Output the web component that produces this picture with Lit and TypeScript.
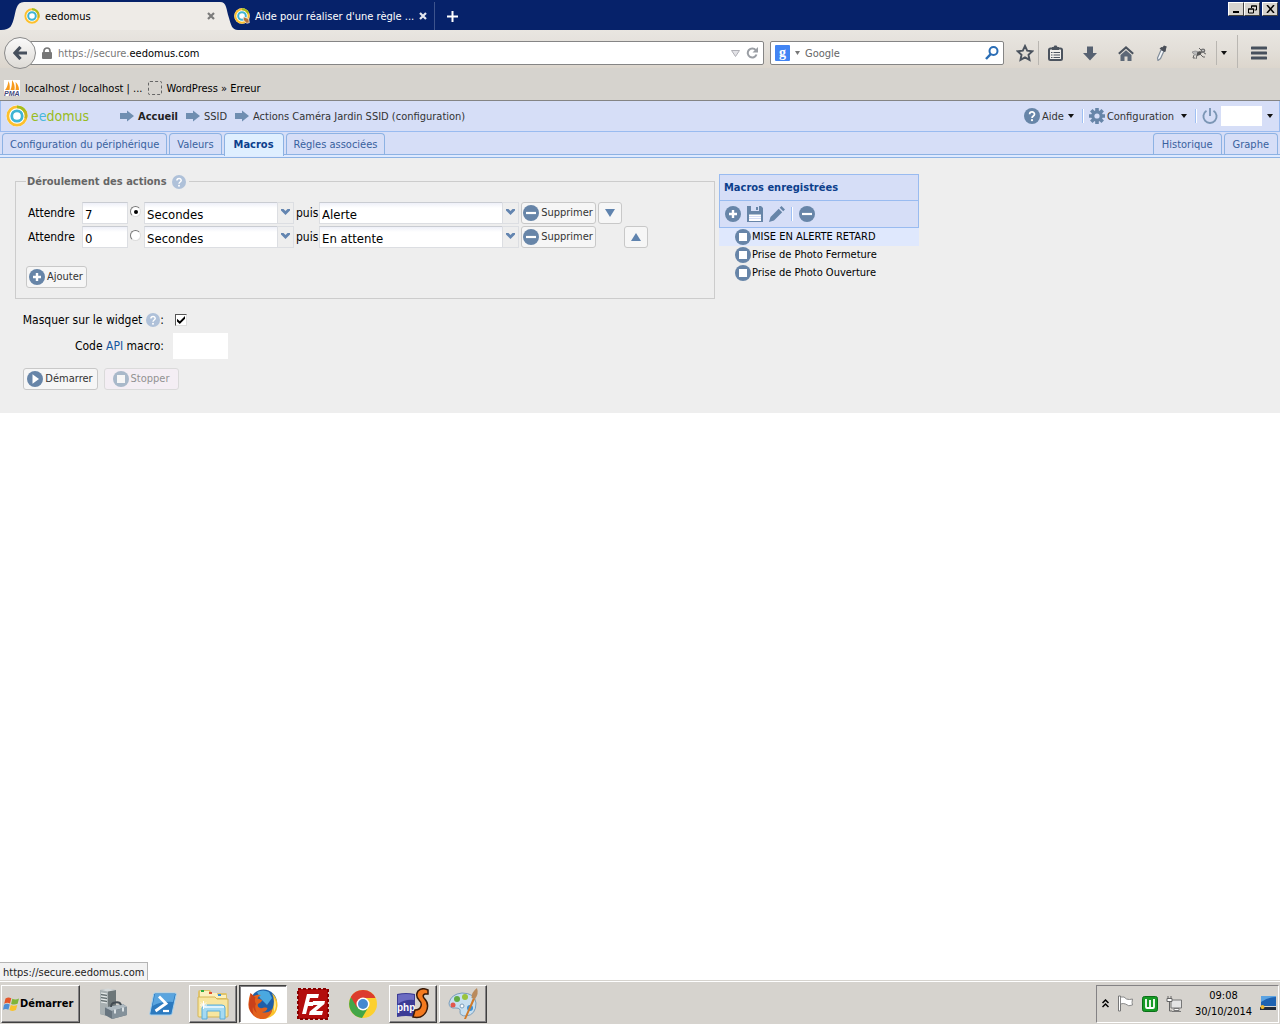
import { LitElement, html, svg, css, nothing } from "lit";
import { customElement, state } from "lit/decorators.js";

const ringIcon = (size: number) => html`
  <svg width=${size} height=${size} viewBox="0 0 24 24" aria-hidden="true">
    <circle cx="12" cy="12" r="11.6" fill="#fff" />
    <circle cx="12" cy="12" r="10" fill="none" stroke="#fcc02e" stroke-width="3" />
    <path d="M12 2a10 10 0 0 1 9.2 6" fill="none" stroke="#a3bd1f" stroke-width="3" />
    <path d="M20.5 6.5a10 10 0 0 1 1 8" fill="none" stroke="#c8b51f" stroke-width="3" />
    <circle cx="12" cy="12" r="5.7" fill="#fff" stroke="#3fb4d4" stroke-width="3" />
  </svg>`;

const ringSearchIcon = html`
  <svg width="16" height="16" viewBox="0 0 24 24" aria-hidden="true">
    <circle cx="12" cy="12" r="11.6" fill="#fff" />
    <circle cx="12" cy="12" r="10" fill="none" stroke="#fcc02e" stroke-width="3" />
    <path d="M12 2a10 10 0 0 1 9.2 6" fill="none" stroke="#a3bd1f" stroke-width="3" />
    <circle cx="12" cy="12" r="5.7" fill="#fff" stroke="#3fb4d4" stroke-width="3" />
    <path d="M14 13l8 3 1 6-4 1-5-5z" fill="#b5743c" stroke="#fff" />
  </svg>`;

const disc = (glyph: unknown, size = 16) => html`
  <svg width=${size} height=${size} viewBox="0 0 16 16" aria-hidden="true">
    <circle cx="8" cy="8" r="8" fill="#6785a8" />${glyph}
  </svg>`;

const plusGlyph = svg`<path d="M8 4v8M4 8h8" stroke="#fff" stroke-width="2.4" />`;
const minusGlyph = svg`<path d="M3 8h10" stroke="#fff" stroke-width="2.2" />`;
const squareGlyph = svg`<path d="M4 4h8v8H4z" fill="#fff" />`;
const playGlyph = svg`<path d="M5.5 3.2 12 8l-6.500 4.800z" fill="#fff" />`;
const helpGlyph = svg`<path d="M5.6 6.2c.1-3 5-3 4.900.1C10.500 8 8 8 8 10" fill="none" stroke="#fff" stroke-width="1.700" /><circle cx="8" cy="12.200" r="1.100" fill="#fff" />`;

const helpSoft = html`
  <svg width="14" height="14" viewBox="0 0 16 16" aria-hidden="true">
    <circle cx="8" cy="8" r="8" fill="#afc1d9" />${helpGlyph}
  </svg>`;

const arrowRight = html`
  <svg width="14" height="12" viewBox="0 0 14 12" aria-hidden="true">
    <path d="M0 3h7V.5L14 6l-7 5.500V9H0z" fill="#6f8eb1" />
  </svg>`;

const caret = html`
  <svg width="6" height="4" viewBox="0 0 6 4" aria-hidden="true">
    <path d="M0 0h6L3 4z" fill="#111" />
  </svg>`;

const chevron = html`
  <svg width="9" height="6" viewBox="0 0 9 6" aria-hidden="true">
    <path d="M0 0h2.500l2 2 2-2H9v1.500L4.500 6 0 1.500z" fill="#6385b0" />
  </svg>`;

const icons = {
  lock: html`<svg width="10" height="12" viewBox="0 0 10 12"><path d="M2 6V4a3 3 0 0 1 6 0v2" fill="none" stroke="#777" stroke-width="1.700"/><rect y="5" width="10" height="7" rx="1" fill="#777"/></svg>`,
  back: html`<svg width="14" height="14" viewBox="0 0 14 14"><path d="M7.500 1 2 7l5.500 6M2.500 7H14" fill="none" stroke="#47505d" stroke-width="3.200"/></svg>`,
  reload: html`<svg width="12" height="12" viewBox="0 0 12 12"><path d="M9.800 3.200A4.500 4.500 0 1 0 10.500 7.500" fill="none" stroke="#9a9ea4" stroke-width="2"/><path d="M6.500 5.500H12V0z" fill="#9a9ea4"/></svg>`,
  search: html`<svg width="14" height="14" viewBox="0 0 14 14"><circle cx="8.500" cy="5" r="4" fill="none" stroke="#2a6db5" stroke-width="2"/><path d="M5.800 8 1 13" stroke="#2a6db5" stroke-width="2.500"/></svg>`,
  star: html`<svg width="18" height="18" viewBox="0 0 18 18"><path d="m9 2 2.200 4.700 5.100.6-3.800 3.500 1 5.100L9 13.400l-4.500 2.500 1-5.100L1.700 7.300l5.100-.6z" fill="none" stroke="#4b535e" stroke-width="1.900"/></svg>`,
  list: html`<svg width="15" height="16" viewBox="0 0 15 16"><rect x="1" y="3.500" width="13" height="11.500" rx="1.500" fill="#f1efec" stroke="#4b535e" stroke-width="2"/><path d="M4 5V2h1.500L6.500.5h2L9.500 2H11v3z" fill="#4b535e"/><path d="M3 7.500h1.500M5.500 7.500H12M3 10h1.500M5.500 10H12M3 12.500h1.500M5.500 12.500H12" stroke="#4b535e" stroke-width="1.200"/></svg>`,
  down: html`<svg width="14" height="15" viewBox="0 0 14 15"><path d="M4 .5h6V7h4l-7 7.500L0 7h4z" fill="#566171"/></svg>`,
  home: html`<svg width="16" height="15" viewBox="0 0 16 15"><path d="M.8 7.800 8 1.400l7.200 6.400" fill="none" stroke="#4b535e" stroke-width="2"/><path d="M2.500 9 8 4.200 13.500 9v6H9.500v-4.500h-3V15h-4z" fill="#5d6877"/></svg>`,
  dropper: html`<svg width="12" height="16" viewBox="0 0 12 16"><path d="M8 6 4.500 13.500 2 15.500l-.5-2.500L5 5z" fill="#f4f7fa" stroke="#828d9a" stroke-width="1.200"/><path d="M3.500 3.500 5.500 2l1 .3L8 .5l2.800 1L10 4l-.3 2.500-1.500.5z" fill="#4a4f58"/></svg>`,
  bug: html`<svg width="15" height="13" viewBox="0 0 15 13"><path d="M1 5Q4 3 8 5l-1 3Q3 9 1 5z" fill="#b9b9b9" stroke="#888" stroke-width=".7"/><path d="M6 5.500 9 4l2 1.500L9 8 6 9z" fill="#555"/><circle cx="12" cy="3.800" r="2.300" fill="#6f6f6f"/><circle cx="12" cy="3.500" r=".8" fill="#ddd"/><path d="M3 8l-1 3h2M6 8l-1 4M9 7l3 3h2M10 3 8 1M13 6l2 1" fill="none" stroke="#666" stroke-width="1"/></svg>`,
  gear: html`<svg width="16" height="16" viewBox="0 0 16 16"><path d="M8 0v16M0 8h16M2.300 2.300l11.400 11.400M13.700 2.300 2.300 13.700" stroke="#6785a8" stroke-width="3.600"/><circle cx="8" cy="8" r="5.800" fill="#6785a8"/><circle cx="8" cy="8" r="2.600" fill="#d6def7"/></svg>`,
  power: html`<svg width="16" height="16" viewBox="0 0 16 16"><path d="M4.500 2.800a6.600 6.600 0 1 0 7 0" fill="none" stroke="#7b96b5" stroke-width="1.900"/><path d="M8 0v8" stroke="#7b96b5" stroke-width="1.900"/></svg>`,
  save: html`<svg width="16" height="16" viewBox="0 0 16 16"><path d="M0 0h14l2 2v14H0z" fill="#6785a8"/><path d="M4 0h8v5H4z" fill="#d6def7"/><path d="M9 1h2v3H9z" fill="#6785a8"/><path d="M2 8.500h12V15H2z" fill="#fff"/><path d="M2 10.500h12M2 12.500h12" stroke="#d6def7"/></svg>`,
  pencil: html`<svg width="16" height="16" viewBox="0 0 16 16"><path d="m0 16 1.500-5 8.200-8.200 3.500 3.500L5 14.500zM10.700 1.800 12.500 0 16 3.500l-1.800 1.800z" fill="#6785a8"/></svg>`,
  triDown: html`<svg width="10" height="8" viewBox="0 0 10 8"><path d="M0 0h10L5 8z" fill="#5f83ae"/></svg>`,
  triUp: html`<svg width="10" height="8" viewBox="0 0 10 8"><path d="M0 8h10L5 0z" fill="#5f83ae"/></svg>`,
  pma: html`<svg width="16" height="16" viewBox="0 0 16 16"><rect width="16" height="16" fill="#fff"/><path d="M1 10C3 8 4 4 4.500 1 6 4 6 8 5.500 10zM6.500 10C8 7 8 3 8 0c2.500 3 3 7 2.500 10zM11.500 10c.5-3 .5-5 0-8 2.500 2 3.500 5 3.500 8z" fill="#f79a1c"/><text x="0" y="16" font-family="Liberation Sans, sans-serif" font-size="7" font-weight="700" font-style="italic" fill="#44477c">PMA</text></svg>`,
  flagWin: html`<svg width="17" height="16" viewBox="0 0 17 16"><path d="M2.500 2.500C4.500 1 6.500 1.200 8.300 2.200L7 7.500C5.300 6.500 3.300 6.500 1.200 7.700z" fill="#e5562a"/><path d="M9.300 2.700c2 1 4.200 1 6.700-.2l-1.400 5.300c-2 1-4.500 1-6.500.1z" fill="#7fb53a"/><path d="M1 8.700c2-1.200 4-1.100 5.800-.2l-1.400 5.200c-1.600-1-3.600-1-5.400.1z" fill="#4d8fd6"/><path d="M7.800 9c2 .9 4.500.9 6.500-.1l-1.400 5.200c-2 1.100-4.500 1-6.500-.1z" fill="#f8c32c"/></svg>`,
};

const taskIcons = {
  server: html`<svg width="32" height="32" viewBox="0 0 32 32"><path d="M3 2 11 1l8 1v24l-9 2-7-2z" fill="#8b9496"/><path d="m3 2 8 1v25l-8-2z" fill="#a8b0b2"/><path d="m11 3 8-1v24l-8 2z" fill="#6d7678"/><path d="m3 2 8-1.500L19 2l-8 1.500z" fill="#d5d9da"/><path d="m4 5 6 1M4 8l6 1M4 11l6 1M4 14l6 1" stroke="#e8ecec" stroke-width="1.200"/><path d="m4 6.500 6 1M4 9.500l6 1M4 12.500l6 1" stroke="#5f696b"/><path d="M8 19.500 26 16l4 3v8l-15 4-7-4z" fill="#68757f"/><path d="m8 19.500 18-3.500 4 3-15 4z" fill="#aeb9c0"/><path d="m15 23 15-4v8l-15 4z" fill="#84919a"/><path d="M14 19q0-4 4-4.500 5-1 6 2.500" fill="none" stroke="#424b52" stroke-width="1.800"/><path d="M18 21.500v4M26 19.500v4" stroke="#d9e0e4" stroke-width="2"/></svg>`,
  shell: html`<svg width="28" height="24" viewBox="0 0 28 24"><path d="M6 1h20q1.500 0 1.200 1.500L23 21.500q-.4 1.500-2 1.500H2q-1.500 0-1.200-1.500L4.600 2.500Q5 1 6 1z" fill="#2c7abf" stroke="#a5d2f0"/><path d="M6 2h20l-2 8Q13 9 3.500 14z" fill="#5aa5df"/><path d="m10 4.500 7 7L6.500 19" fill="none" stroke="#fff" stroke-width="2.800"/><path d="M14 19h6" stroke="#fff" stroke-width="2.200"/></svg>`,
  folder: html`<svg width="34" height="32" viewBox="0 0 34 32"><path d="M2 8V4q0-2 2-2h10l2 3h14q1 0 1 2v20H2z" fill="#dfc36c"/><path d="M4 3h9v6H4zM12 5h9l1 4H12zM20 7h10v3H20z" fill="#fbf0bf"/><path d="M5 2h3v2H5z" fill="#2faa42"/><path d="M13 4h3v2h-3z" fill="#e2502e"/><path d="M22 6h3v2h-3z" fill="#2f8de0"/><path d="M2 9h17l2 2h11v17q0 1-1 1H3q-1 0-1-1z" fill="#f8e6a0" stroke="#d4b454"/><path d="M6 31V20q0-3 3-3h17q3 0 3 3v11h-5v-8H11v8z" fill="#a5daf2" stroke="#5baeda"/><path d="M7 18h21v2H7z" fill="#dff3fc"/><path d="M4 17h7M7.500 13v8M5 14.500l5 5M10 14.500l-5 5" stroke="#fff" stroke-width="1"/></svg>`,
  firefox: html`<svg width="30" height="30" viewBox="0 0 30 30"><circle cx="15.500" cy="14" r="13.500" fill="#1f5fa8"/><path d="M9 3q6-3 12 0l3 6-5 7-7-7z" fill="#4aa8e0"/><path d="M24 4q6 6 5.500 13-1 8-7 11-4 2-9 2 9-3 11-10 3-8-.5-16z" fill="#fbc22b"/><path d="M26.500 9q3 8-.5 14 0-7 .5-14z" fill="#fff0a0"/><path d="M2.500 4Q3.500 7 6 7q3-2 7-1-3 1-3.500 3.500L14 11q0 2-4 4-1 3 2 4 2 .5 4-.5 3-.5 3.500 1Q18 23 14 23q6 2 10-3 0 6-6 9.500-7 2-12-2.500Q-.5 21 .5 14 1 8 2.500 4z" fill="#e2611b"/><path d="M2.500 4Q3 8 1.500 12-.500 20 6 27q-2-5-1-9 1 4 4 6-3-6-1-9-2-3-.5-6.500z" fill="#c9401a"/></svg>`,
  filezilla: html`<svg width="32" height="32" viewBox="0 0 32 32"><rect x="1" y="1" width="30" height="30" fill="#b30d0d" stroke="#870000" stroke-width="2" stroke-dasharray="3 2"/><path d="M10 6h12l-1 4h-8l-1 4h5l-1 4h-5l-2 8H5zM16 13h12l-.6 3-8.400 7h7l-1 4H12l.7-3.500 8-6.500h-5.500z" fill="#fff"/></svg>`,
  chrome: html`<svg width="28" height="28" viewBox="0 0 28 28"><circle cx="14" cy="14" r="14" fill="#fcd02f"/><path d="M14 14 2 7a14 14 0 0 0 11 21l6.500-11-5.500-3z" fill="#42a647"/><path d="M1.800 7 8 17.500 14 8h12.500A14 14 0 0 0 1.800 7z" fill="#dc3c2d"/><circle cx="14" cy="14" r="6.500" fill="#fff"/><circle cx="14" cy="14" r="5" fill="#4589d0"/></svg>`,
  php: html`<svg width="32" height="32" viewBox="0 0 32 32"><path d="M0 6q9-2 18 0v23q-9-2-18 0z" fill="#3c3c96"/><path d="M1 7q8-2 16 0v5q-9-1-16 4z" fill="#6c6cc2"/><text x="0" y="23" font-family="Liberation Sans, sans-serif" font-size="10" font-weight="700" fill="#fff">php</text><path d="M31 2q-6-3-10 1-3 5 1 9 3 3 2 6-1 4-6 4l-2 7q9 2 13-5 4-8-2-14-2-3 1-4h3z" fill="#f47a1f" stroke="#3a1a08" stroke-width="1.500"/></svg>`,
  paint: html`<svg width="32" height="32" viewBox="0 0 32 32"><path d="M2 15Q4 6 15 5q13 0 14 10 0 12-10 13-6 0-6-4 1-4-4-4-7 1-7-5z" fill="#c7dff0" stroke="#7a9dbb"/><circle cx="6" cy="17" r="2.500" fill="#e2574c"/><circle cx="10" cy="11" r="3" fill="#62ab44"/><circle cx="18" cy="9" r="3" fill="#9ac33c"/><circle cx="23" cy="20" r="3" fill="#3b92d6"/><circle cx="15" cy="18" r="2" fill="#fff" stroke="#7a9dbb"/><path d="m17 31 9-21 2 1-9 20z" fill="#d07a2a"/><path d="M24.500 10q0-6 5.500-10 2 6-2 11z" fill="#b98a5c"/></svg>`,
};

interface Step {
  delay: string;
  unit: string;
  value: string;
}

@customElement("app-root")
export class AppRoot extends LitElement {
  @state() private steps: Step[] = [
    { delay: "7", unit: "Secondes", value: "Alerte" },
    { delay: "0", unit: "Secondes", value: "En attente" },
  ];
  @state() private current = 0;
  @state() private macros = ["MISE EN ALERTE RETARD", "Prise de Photo Fermeture", "Prise de Photo Ouverture"];

  static styles = css`
    :host {
      display: flex;
      flex-direction: column;
      min-height: 100vh;
      background: #fff;
      color: #000;
      font: 11px/16px Tahoma, "DejaVu Sans Condensed", "DejaVu Sans", sans-serif;
    }
    * { box-sizing: border-box; }
    svg { display: block; flex: none; }
    button, input, select { font: inherit; color: inherit; margin: 0; padding: 0; border: 0; background: none; }
    a { color: inherit; text-decoration: none; }
    ul { list-style: none; margin: 0; padding: 0; }
    .grow { flex: 1; }

    .titlebar { display: flex; height: 30px; background: #06226a; color: #fff; }
    .tabs { display: flex; flex: 1; align-items: flex-end; }
    .tab { display: flex; height: 28px; color: #000; }
    .tab-body { display: flex; align-items: center; width: 196px; background: #eeebe7; gap: 5px; }
    .tab-idle { display: flex; align-items: center; height: 28px; gap: 5px; width: 201px; margin-left: -4px; padding-right: 10px; border-right: 1px solid #3d548d; }
    .tab-name { flex: 1; padding-top: 1px; text-align: left; white-space: nowrap; }
    .tab-add { padding: 8px 12px; }
    .window-buttons { display: flex; padding: 2px 2px 0 0; align-items: flex-start; }
    .window-button { display: grid; place-items: center; width: 16px; height: 14px; background: #d6d3ce; border: 1px solid; border-color: #fff #404040 #404040 #fff; }
    .window-button:last-child { margin-left: 2px; }

    .navbar { display: flex; align-items: center; height: 38px; padding: 8px 12px 0 4px; background: linear-gradient(#e9e6e1, #e3dfd9 50%, #dcd6cd); }
    .back { display: grid; place-items: center; width: 32px; height: 32px; border: 1px solid #8a8a8a; border-radius: 50%; background: linear-gradient(#fafafa, #dedbd6); z-index: 1; }
    .field { display: flex; align-items: center; height: 24px; border: 1px solid #858585; border-radius: 2px; background: #fff; }
    .address { flex: 1; margin-left: -8px; padding: 0 5px 0 13px; gap: 6px; }
    .host { flex: 1; padding-top: 2px; color: #777; }
    .host b { font-weight: 400; color: #000; }
    .search { width: 234px; margin-left: 6px; padding: 0 4px; gap: 5px; }
    .search input { flex: 1; min-width: 0; padding-top: 2px; outline: 0; }
    .search input::placeholder { color: #666; opacity: 1; }
    .google { display: grid; place-items: center; width: 15px; height: 16px; border-radius: 1px; background: #4285f4; color: #fff; font: 700 14px/14px "Liberation Serif", serif; }
    .tools { display: flex; align-items: center; padding-left: 11px; }
    .tool { display: grid; place-items: center; width: 36px; height: 24px; }
    .tool-star { width: 19px; }
    .tool-list { width: 34px; border-left: 1px solid #b9b6b1; margin-left: 4px; }
    .tool-more { width: 15px; border-left: 1px solid #b9b6b1; }
    .tool-menu { width: 31px; height: 36px; border-left: 1px solid #bab7b2; margin-left: 6px; padding-left: 12px; }

    .bookmarks { display: flex; align-items: center; height: 33px; padding: 8px 4px 0; gap: 5px; background: #d6d3ce; border-bottom: 1px solid #848484; }
    .bookmark { display: flex; align-items: center; gap: 5px; }
    .bookmark span { padding-top: 2px; }
    .placeholder-icon { width: 14px; height: 14px; border: 1px dashed #666; border-radius: 2px; }

    .topbar { display: flex; align-items: center; height: 31px; padding-left: 5px; background: #d6def7; border: solid #99bbf0; border-width: 0 1px 1px; color: #333; }
    .topbar .text { padding-top: 1px; }
    .brand { display: flex; align-items: center; gap: 3px; width: 114px; font-size: 14px; color: #98bb22; }
    .brand i { font-style: normal; color: #49b8dc; }
    .crumbs { display: flex; gap: 8px; }
    .crumb { display: flex; align-items: center; gap: 4px; }
    .crumb-home { font-weight: 700; color: #222; }
    .menu { display: flex; align-items: center; gap: 2px; }
    .menu svg:last-child { margin-left: 2px; }
    .menu-wide svg:last-child { margin-left: 5px; }
    .sep { width: 2px; height: 14px; margin: 0 5px 0 8px; border-left: 1px solid #9fc0f3; border-right: 1px solid #fff; }
    .masked { width: 41px; height: 20px; background: #fff; }
    .account { gap: 3px; padding-right: 6px; }

    .pages { display: flex; align-items: flex-end; gap: 2px; height: 26px; padding: 0 2px 3px; background: linear-gradient(#d6def7 22px, #8db2e3 22px, #8db2e3 23px, #dfeaff 23px, #dfeaff 25px, #8db2e3 25px); color: #38619e; }
    .page { height: 22px; padding: 0 7px; border: 1px solid #8db2e3; border-bottom: 0; border-radius: 4px 4px 0 0; white-space: nowrap; }
    .page-on { height: 23px; margin-bottom: -1px; padding: 0 9px; background: #dfefff; color: #0c408c; font-weight: 700; }
    .grow ~ .page { padding: 0 8px; }

    .content { display: flex; align-items: flex-start; gap: 4px; min-height: 255px; padding: 16px 15px 23px; background: #eee; }
    .main { flex: 0 1 700px; }
    .steps { min-width: 0; height: 125px; margin: 0; padding: 13px 10px 10px; border: 1px solid #ccc; }
    .steps legend { display: flex; align-items: center; gap: 5px; padding: 0 3px 0 1px; font-weight: 700; line-height: 15px; color: #666; }
    .step { display: grid; grid-template-columns: 54px 46px 12px 150px 21px 200px 75px 24px 24px; column-gap: 2px; align-items: center; height: 22px; margin-bottom: 2px; font-size: 12px; }
    .step .label { padding-left: 2px; }
    .box { display: block; width: 100%; height: 22px; border: 1px solid #dcdee2; border-top-color: #c9ccd2; background: linear-gradient(#eef0f8, #fff 5px); outline: 0; appearance: none; padding: 3px 2px 0; font-size: 13px; }
    .combo { position: relative; display: flex; height: 22px; }
    .combo-mark { position: absolute; right: 0; top: 0; display: grid; place-items: center; width: 17px; height: 22px; padding-bottom: 3px; background: #eee; border: 1px solid #dcdee2; pointer-events: none; }
    .radio { appearance: none; display: grid; place-items: center; width: 11px; height: 11px; border: 1px solid; border-color: #777 #ddd #ddd #777; border-radius: 50%; background: #fff; margin-bottom: 3px; }
    .radio:checked::before { content: ""; width: 4px; height: 4px; border-radius: 50%; background: #000; }
    .btn { display: inline-flex; align-items: center; justify-content: center; gap: 2px; height: 22px; padding: 0 3px 0 2px; border: 1px solid #c8c8c8; border-radius: 3px; background: #f6f6f6; color: #333; font-size: 11px; white-space: nowrap; }
    .btn:disabled { opacity: .5; background: #faeffa; }
    .btn-up { grid-column: 9; }
    .add { margin-top: 16px; }

    .options { display: grid; grid-template-columns: 149px auto; column-gap: 9px; justify-content: start; align-items: center; padding-top: 8px; font-size: 12px; }
    .option-label { display: flex; align-items: center; justify-content: flex-end; gap: 4px; height: 26px; white-space: nowrap; }
    .option-label a { color: #15569f; }
    .option-label svg { margin-right: -4px; }
    .check { appearance: none; display: grid; place-items: center; width: 12px; height: 12px; margin-left: 2px; border: 1px solid #555; border-right-color: #ddd; border-bottom-color: #ddd; background: #fff; }
    .check:checked::before { content: ""; width: 8px; height: 8px; background: #000; clip-path: polygon(0 35%, 35% 65%, 100% 0, 100% 35%, 35% 100%, 0 70%); }
    .code { width: 55px; height: 26px; background: #fff; }
    .run { display: flex; gap: 6px; padding: 9px 8px 0; }
    .run .btn { width: 75px; }

    .macros { flex: 0 0 200px; }
    .macros h2 { margin: 0; padding: 5px 4px; height: 26px; border: 1px solid #99bbf0; border-bottom: 0; background: #d6def7; color: #0c408c; font: inherit; font-weight: 700; }
    .toolbar { display: flex; align-items: center; gap: 6px; height: 28px; padding: 0 5px; border: 1px solid #99bbf0; background: #d6def7; }
    .toolbar .sep { margin: 0; }
    .macro { display: flex; align-items: center; gap: 1px; width: 100%; height: 18px; padding-left: 16px; }
    .macro-on { background: #dfe8fd; }

    .blank { flex: 1; display: flex; align-items: flex-end; }
    .status { height: 18px; padding: 2px 3px 0; border: 1px solid #b4b4b4; border-left: 0; border-bottom: 0; background: #f2f2f2; color: #222; }

    .taskbar { display: flex; align-items: center; height: 44px; padding: 2px 0 0 1px; border-top: 1px solid #d6d3ce; background: #d6d3ce; box-shadow: inset 0 1px #fff; }
    .start, .task-open { border: 1px solid; border-color: #fff #404040 #404040 #fff; box-shadow: inset -1px -1px #848284; }
    .start { display: flex; align-items: center; gap: 0; width: 79px; height: 38px; padding-left: 1px; font-weight: 700; margin-right: 9px; }
    .task { display: grid; place-items: center; width: 48px; height: 38px; margin-right: 2px; }
    .task-on { border: 1px solid; border-color: #404040 #fff #fff #404040; background: #fff; box-shadow: inset 1px 1px #848284; }
    .tray { display: flex; align-items: center; gap: 8px; width: 183px; height: 38px; padding: 0 2px 0 5px; border: 1px solid; border-color: #848284 #fff #fff #848284; margin-right: 1px; }
    .clock { flex: 1; padding-left: 5px; text-align: center; }
    .clock span { display: block; }
  `;

  private addStep() {
    this.steps = [...this.steps, { delay: "0", unit: "Secondes", value: "En attente" }];
  }

  private removeStep(index: number) {
    this.steps = this.steps.filter((_, i) => i !== index);
  }

  private moveStep(index: number, by: number) {
    const next = [...this.steps];
    const [item] = next.splice(index, 1);
    next.splice(index + by, 0, item);
    this.steps = next;
  }

  private combo(label: string, value: string, choices: string[]) {
    return html`<span class="combo">
      <select class="box" aria-label=${label}>
        ${choices.map((c) => html`<option ?selected=${c === value}>${c}</option>`)}
      </select>
      <span class="combo-mark">${chevron}</span>
    </span>`;
  }

  private step(s: Step, i: number) {
    return html`<div class="step">
      <label class="label" for="delay-${i}">Attendre</label>
      <input class="box" id="delay-${i}" .value=${s.delay} />
      <input class="radio" type="radio" name="step" aria-label="Action ${i + 1}" .checked=${i === 0} />
      ${this.combo("Unité", s.unit, ["Secondes", "Minutes", "Heures"])}
      <span>puis</span>
      ${this.combo("Valeur", s.value, ["Alerte", "En attente"])}
      <button class="btn" @click=${() => this.removeStep(i)}>${disc(minusGlyph)}Supprimer</button>
      ${i < this.steps.length - 1
        ? html`<button class="btn" aria-label="Descendre" @click=${() => this.moveStep(i, 1)}>${icons.triDown}</button>`
        : nothing}
      ${i > 0
        ? html`<button class="btn btn-up" aria-label="Monter" @click=${() => this.moveStep(i, -1)}>${icons.triUp}</button>`
        : nothing}
    </div>`;
  }

  private browser() {
    const cross = (c: string) => html`<svg width="8" height="8" viewBox="0 0 8 8"><path d="m1 1 6 6m0-6L1 7" stroke=${c} stroke-width="2.200"/></svg>`;
    return html`
      <div class="titlebar">
        <div class="tabs">
          <div class="tab">
            <svg width="24" height="28" viewBox="0 0 24 28"><path d="M1 28c10 0 11-5 13-12S16 0 24 0v28z" fill="#eeebe7"/></svg>
            <div class="tab-body">
              ${ringIcon(16)}<span class="tab-name">eedomus</span>
              <button aria-label="Fermer l'onglet">${cross("#7b7b7b")}</button>
              <span></span>
            </div>
            <svg width="18" height="28" viewBox="0 0 18 28"><path d="M0 0c7 0 6 7 9 16 2 7 3 12 9 12H0z" fill="#eeebe7"/></svg>
          </div>
          <div class="tab-idle">
            ${ringSearchIcon}<span class="tab-name">Aide pour réaliser d'une règle ...</span>
            <button aria-label="Fermer l'onglet">${cross("#e4e7ef")}</button>
          </div>
          <button class="tab-add" aria-label="Nouvel onglet">
            <svg width="11" height="11" viewBox="0 0 11 11"><path d="M5.500 0v11M0 5.500h11" stroke="#fff" stroke-width="2"/></svg>
          </button>
        </div>
        <div class="window-buttons">
          <button class="window-button" aria-label="Réduire"><svg width="9" height="8" viewBox="0 0 9 8"><path d="M1 7h6" stroke="#000" stroke-width="2"/></svg></button>
          <button class="window-button" aria-label="Restaurer"><svg width="9" height="9" viewBox="0 0 9 9"><path d="M3.500 3V1h5v4h-2M.5 4h5v4h-5zM3 1h6M0 4h6" fill="none" stroke="#000"/></svg></button>
          <button class="window-button" aria-label="Fermer"><svg width="9" height="8" viewBox="0 0 9 8"><path d="m1 0 7 8m0-8L1 8" stroke="#000" stroke-width="1.500"/></svg></button>
        </div>
      </div>
      <nav class="navbar" aria-label="Navigation">
        <button class="back" aria-label="Précédent">${icons.back}</button>
        <div class="field address">
          ${icons.lock}<span class="host">https://secure.<b>eedomus.com</b></span>
          <svg width="9" height="7" viewBox="0 0 9 7"><path d="M.5.5h8l-4 6z" fill="#e2e2e6" stroke="#b0b0b6"/></svg>
          <button aria-label="Actualiser">${icons.reload}</button>
        </div>
        <div class="field search">
          <span class="google">g</span>
          <svg width="5" height="4" viewBox="0 0 5 4"><path d="M0 0h5L2.500 4z" fill="#777"/></svg>
          <input type="search" placeholder="Google" aria-label="Rechercher" />
          <button aria-label="Lancer la recherche">${icons.search}</button>
        </div>
        <div class="tools">
          <button class="tool tool-star" aria-label="Marque-page">${icons.star}</button>
          <button class="tool tool-list" aria-label="Marque-pages">${icons.list}</button>
          <button class="tool" aria-label="Téléchargements">${icons.down}</button>
          <button class="tool" aria-label="Accueil">${icons.home}</button>
          <button class="tool" aria-label="Pipette">${icons.dropper}</button>
          <button class="tool" aria-label="Firebug">${icons.bug}</button>
          <button class="tool tool-more" aria-label="Options">${caret}</button>
          <button class="tool tool-menu" aria-label="Menu">
            <svg width="16" height="14" viewBox="0 0 16 14"><path d="M1 2h14M1 7h14M1 12h14" stroke="#47505d" stroke-width="3" stroke-linecap="round"/></svg>
          </button>
        </div>
      </nav>
      <nav class="bookmarks" aria-label="Marque-pages">
        <a class="bookmark" href="#">${icons.pma}<span>localhost / localhost | ...</span></a>
        <a class="bookmark" href="#"><i class="placeholder-icon"></i><span>WordPress » Erreur</span></a>
      </nav>`;
  }

  private header() {
    return html`
      <header class="topbar">
        <a class="brand" href="#">${ringIcon(22)}<span>e<i>e</i>domus</span></a>
        <nav class="crumbs" aria-label="Fil d'Ariane">
          <a class="crumb crumb-home" href="#">${arrowRight}<span class="text">Accueil</span></a>
          <a class="crumb" href="#">${arrowRight}<span class="text">SSID</span></a>
          <a class="crumb" href="#">${arrowRight}<span class="text">Actions Caméra Jardin SSID (configuration)</span></a>
        </nav>
        <span class="grow"></span>
        <button class="menu">${disc(helpGlyph)}<span class="text">Aide</span>${caret}</button>
        <span class="sep"></span>
        <button class="menu menu-wide">${icons.gear}<span class="text">Configuration</span>${caret}</button>
        <span class="sep"></span>
        <button class="menu account" aria-label="Compte">${icons.power}<span class="masked"></span>${caret}</button>
      </header>
      <nav class="pages" aria-label="Sections">
        <button class="page">Configuration du périphérique</button>
        <button class="page">Valeurs</button>
        <button class="page page-on">Macros</button>
        <button class="page">Règles associées</button>
        <span class="grow"></span>
        <button class="page">Historique</button>
        <button class="page">Graphe</button>
      </nav>`;
  }

  private taskbar() {
    return html`
      <footer class="taskbar">
        <button class="start">${icons.flagWin}Démarrer</button>
        <button class="task" aria-label="Gestionnaire de serveur">${taskIcons.server}</button>
        <button class="task" aria-label="PowerShell">${taskIcons.shell}</button>
        <button class="task task-open" aria-label="Explorateur">${taskIcons.folder}</button>
        <button class="task task-on" aria-label="Firefox">${taskIcons.firefox}</button>
        <button class="task" aria-label="FileZilla">${taskIcons.filezilla}</button>
        <button class="task" aria-label="Chrome">${taskIcons.chrome}</button>
        <button class="task task-open" aria-label="PhpStorm">${taskIcons.php}</button>
        <button class="task task-open" aria-label="Paint">${taskIcons.paint}</button>
        <span class="grow"></span>
        <div class="tray">
          <svg width="7" height="9" viewBox="0 0 7 9"><path d="m.5 4 3-3 3 3m-6 4 3-3 3 3" fill="none" stroke="#000" stroke-width="1.500"/></svg>
          <svg width="17" height="17" viewBox="0 0 17 17"><path d="M1.500 1v15h2V1z" fill="#fff" stroke="#777"/><path d="M3.500 2q4-1 6 2 3 1 6 0-1 4 0 6-4 2-7-1-2-1-5 0z" fill="#fff" stroke="#888"/></svg>
          <svg width="16" height="16" viewBox="0 0 16 16"><rect x=".5" y=".5" width="15" height="15" rx="2" fill="#169b26" stroke="#0b6f18"/><path d="M4 3v8q0 1 1 1h6q1 0 1-1V3M8 4v8" fill="none" stroke="#fff" stroke-width="1.800"/></svg>
          <svg width="16" height="16" viewBox="0 0 16 16"><path d="M5 4h10.500v8H5z" fill="#e4e4e4" stroke="#777"/><path d="M8 12.500h5v2H8zM6 15.500h9" stroke="#777" fill="#fff"/><path d="M1 2.500h5v3H1z" fill="#fff" stroke="#666"/><path d="M2 0v2M5 0v2M3.500 6v9H6" fill="none" stroke="#666"/></svg>
          <div class="clock"><span>09:08</span><span>30/10/2014</span></div>
          <svg width="16" height="15" viewBox="0 0 16 15"><path d="M1 0h15v10H1z" fill="#1d62b2"/><path d="M1 6q7-5 15-5V0H1z" fill="#5ba3e2"/><path d="M0 11h16v3H0z" fill="#222c3a"/><circle cx="2.500" cy="11" r="2" fill="#f0b72e"/></svg>
        </div>
      </footer>`;
  }

  render() {
    return html`
      ${this.browser()} ${this.header()}
      <main class="content">
        <div class="main">
          <fieldset class="steps">
            <legend>Déroulement des actions ${helpSoft}</legend>
            ${this.steps.map((s, i) => this.step(s, i))}
            <button class="btn add" @click=${this.addStep}>${disc(plusGlyph)}Ajouter</button>
          </fieldset>
          <div class="options">
            <label class="option-label" for="hide">Masquer sur le widget ${helpSoft}<span>:</span></label>
            <input class="check" id="hide" type="checkbox" checked />
            <span class="option-label"><span>Code <a href="#">API</a> macro:</span></span>
            <span class="code"></span>
          </div>
          <div class="run">
            <button class="btn">${disc(playGlyph)}Démarrer</button>
            <button class="btn" disabled>${disc(squareGlyph)}Stopper</button>
          </div>
        </div>
        <aside class="macros">
          <h2>Macros enregistrées</h2>
          <div class="toolbar">
            <button aria-label="Ajouter">${disc(plusGlyph)}</button>
            <button aria-label="Enregistrer">${icons.save}</button>
            <button aria-label="Modifier">${icons.pencil}</button>
            <span class="sep"></span>
            <button aria-label="Supprimer">${disc(minusGlyph)}</button>
          </div>
          <ul>
            ${this.macros.map(
              (m, i) => html`<li>
                <button class="macro ${i === this.current ? "macro-on" : ""}" @click=${() => (this.current = i)}>${disc(squareGlyph)}${m}</button>
              </li>`
            )}
          </ul>
        </aside>
      </main>
      <div class="blank"><div class="status">https://secure.eedomus.com</div></div>
      ${this.taskbar()}`;
  }
}
